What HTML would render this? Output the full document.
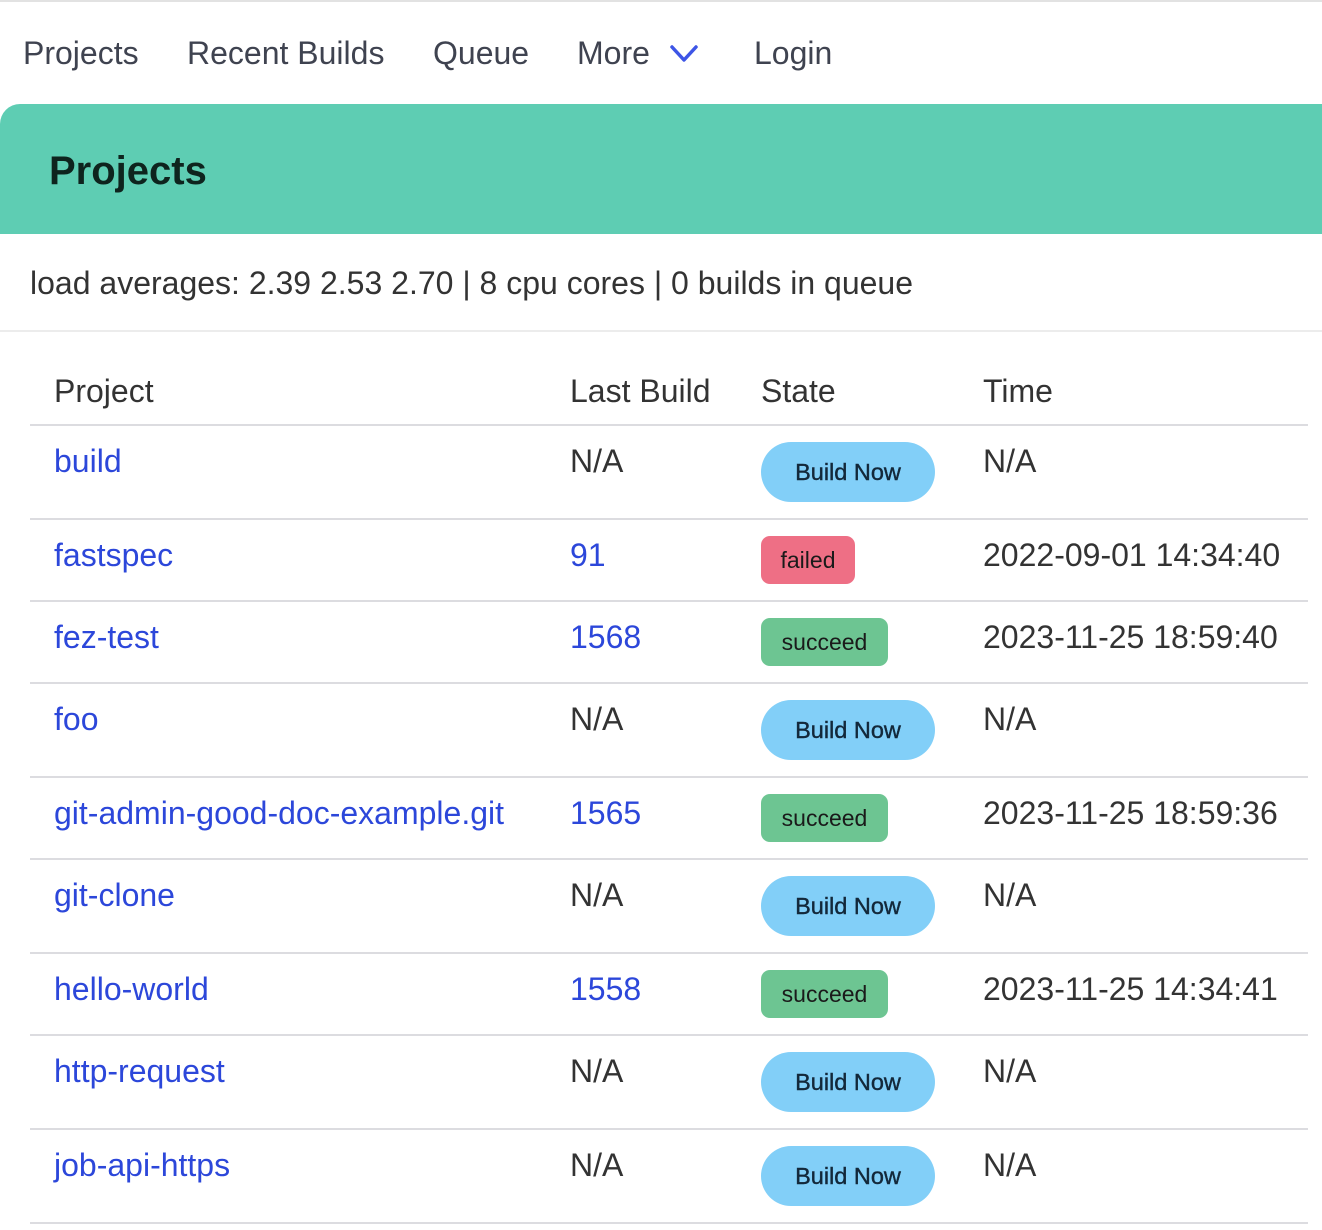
<!DOCTYPE html>
<html><head><meta charset="utf-8"><style>
*{margin:0;padding:0;box-sizing:border-box}
html,body{width:1322px;height:1230px;background:#fff;overflow:hidden;font-family:"Liberation Sans",Arial,sans-serif;color:#333}
.a{position:absolute;white-space:nowrap;font-size:32px;line-height:38px}
.nav{color:#3f4350}
.lnk{color:#2c47da}
.hl{position:absolute;left:30px;width:1278px;height:2px;background:#dcdce0}
.btn{position:absolute;left:761px;width:174px;height:60px;border-radius:30px;background:#82cff8;color:#13283a;font-size:23.5px;line-height:60px;text-align:center;-webkit-text-stroke:0.4px #13283a}
.bad{position:absolute;left:761px;height:48px;border-radius:9px;font-size:23px;line-height:48px;text-align:center;color:#1a1a1a}
.f{width:94px;background:#ee6f85}
.s{width:127px;background:#6dc592}
</style></head><body>
<div style="position:absolute;left:0;top:0;width:1322px;height:2px;background:#e2e2e2"></div>
<div class="a nav" style="left:23px;top:34px">Projects</div>
<div class="a nav" style="left:187px;top:34px">Recent Builds</div>
<div class="a nav" style="left:433px;top:34px">Queue</div>
<div class="a nav" style="left:577px;top:34px">More</div>
<svg style="position:absolute;left:668px;top:42px" width="32" height="24" viewBox="0 0 32 24"><path d="M4 5 L16 18 L28 5" fill="none" stroke="#3d55e6" stroke-width="3.5" stroke-linecap="round" stroke-linejoin="round"/></svg>
<div class="a nav" style="left:754px;top:34px">Login</div>

<div style="position:absolute;left:0;top:104px;width:1322px;height:130px;background:#5ecdb3;border-top-left-radius:20px"></div>
<div class="a" style="left:49px;top:149px;font-size:40px;line-height:44px;font-weight:bold;color:#0e241e">Projects</div>

<div class="a" style="left:30px;top:264px;color:#333">load averages: 2.39 2.53 2.70 | 8 cpu cores | 0 builds in queue</div>
<div style="position:absolute;left:0;top:330px;width:1322px;height:2px;background:#ececec"></div>

<div class="a" style="left:54px;top:372px">Project</div>
<div class="a" style="left:570px;top:372px">Last Build</div>
<div class="a" style="left:761px;top:372px">State</div>
<div class="a" style="left:983px;top:372px">Time</div>
<div class="hl" style="top:424px"></div>

<div class="a lnk" style="left:54px;top:442px">build</div>
<div class="a" style="left:570px;top:442px">N/A</div>
<div class="btn" style="top:442px">Build Now</div>
<div class="a" style="left:983px;top:442px">N/A</div>
<div class="hl" style="top:518px"></div>

<div class="a lnk" style="left:54px;top:536px">fastspec</div>
<div class="a lnk" style="left:570px;top:536px">91</div>
<div class="bad f" style="top:536px">failed</div>
<div class="a" style="left:983px;top:536px">2022-09-01 14:34:40</div>
<div class="hl" style="top:600px"></div>

<div class="a lnk" style="left:54px;top:618px">fez-test</div>
<div class="a lnk" style="left:570px;top:618px">1568</div>
<div class="bad s" style="top:618px">succeed</div>
<div class="a" style="left:983px;top:618px">2023-11-25 18:59:40</div>
<div class="hl" style="top:682px"></div>

<div class="a lnk" style="left:54px;top:700px">foo</div>
<div class="a" style="left:570px;top:700px">N/A</div>
<div class="btn" style="top:700px">Build Now</div>
<div class="a" style="left:983px;top:700px">N/A</div>
<div class="hl" style="top:776px"></div>

<div class="a lnk" style="left:54px;top:794px">git-admin-good-doc-example.git</div>
<div class="a lnk" style="left:570px;top:794px">1565</div>
<div class="bad s" style="top:794px">succeed</div>
<div class="a" style="left:983px;top:794px">2023-11-25 18:59:36</div>
<div class="hl" style="top:858px"></div>

<div class="a lnk" style="left:54px;top:876px">git-clone</div>
<div class="a" style="left:570px;top:876px">N/A</div>
<div class="btn" style="top:876px">Build Now</div>
<div class="a" style="left:983px;top:876px">N/A</div>
<div class="hl" style="top:952px"></div>

<div class="a lnk" style="left:54px;top:970px">hello-world</div>
<div class="a lnk" style="left:570px;top:970px">1558</div>
<div class="bad s" style="top:970px">succeed</div>
<div class="a" style="left:983px;top:970px">2023-11-25 14:34:41</div>
<div class="hl" style="top:1034px"></div>

<div class="a lnk" style="left:54px;top:1052px">http-request</div>
<div class="a" style="left:570px;top:1052px">N/A</div>
<div class="btn" style="top:1052px">Build Now</div>
<div class="a" style="left:983px;top:1052px">N/A</div>
<div class="hl" style="top:1128px"></div>

<div class="a lnk" style="left:54px;top:1146px">job-api-https</div>
<div class="a" style="left:570px;top:1146px">N/A</div>
<div class="btn" style="top:1146px">Build Now</div>
<div class="a" style="left:983px;top:1146px">N/A</div>
<div class="hl" style="top:1222px"></div>
</body></html>
